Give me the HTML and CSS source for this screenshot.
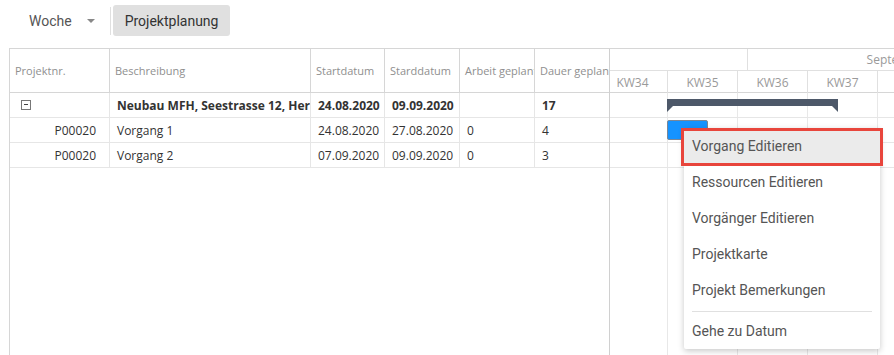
FILE: index.html
```html
<!DOCTYPE html>
<html lang="de">
<head>
    <meta charset="UTF-8">
    <meta name="viewport" content="width=device-width, initial-scale=1.0">
    <title>Projektplanung</title>
    <link rel="stylesheet" href="styles.css">
</head>
<body>

    <div class="toolbar">
        <div class="dropdown">
            <span>Woche</span>
            <span class="caret"></span>
        </div>
        <span class="tb-sep"></span>
        <button class="tb-btn">Projektplanung</button>
    </div>

    <div class="gantt">
        <div class="grid">
            <div class="grid-row grid-head">
                <div class="cell">Projektnr.</div>
                <div class="cell">Beschreibung</div>
                <div class="cell">Startdatum</div>
                <div class="cell">Starddatum</div>
                <div class="cell">Arbeit geplant</div>
                <div class="cell">Dauer geplant</div>
            </div>
            <div class="grid-row group">
                <div class="cell"><span class="collapse-icon"></span></div>
                <div class="cell">Neubau MFH, Seestrasse 12, Herrliberg</div>
                <div class="cell">24.08.2020</div>
                <div class="cell">09.09.2020</div>
                <div class="cell"></div>
                <div class="cell">17</div>
            </div>
            <div class="grid-row">
                <div class="cell nr">P00020</div>
                <div class="cell">Vorgang 1</div>
                <div class="cell">24.08.2020</div>
                <div class="cell">27.08.2020</div>
                <div class="cell">0</div>
                <div class="cell">4</div>
            </div>
            <div class="grid-row">
                <div class="cell nr">P00020</div>
                <div class="cell">Vorgang 2</div>
                <div class="cell">07.09.2020</div>
                <div class="cell">09.09.2020</div>
                <div class="cell">0</div>
                <div class="cell">3</div>
            </div>
        </div>

        <div class="chart">
            <div class="chart-inner">
                <div class="timeline">
                    <div class="months">
                        <div class="month aug"></div>
                        <div class="month sep">September</div>
                    </div>
                    <div class="weeks">
                        <div class="week">KW34</div>
                        <div class="week">KW35</div>
                        <div class="week">KW36</div>
                        <div class="week">KW37</div>
                        <div class="week">KW38</div>
                        <div class="week">KW39</div>
                    </div>
                </div>
                <div class="chart-body">
                    <div class="chart-row"><div class="summary-bar"></div></div>
                    <div class="chart-row"><div class="task-bar"></div></div>
                    <div class="chart-row"><div class="task-bar t2"></div></div>
                </div>
            </div>
        </div>
    </div>

    <!-- context menu opened on the task bar -->
    <ul class="context-menu">
        <li class="active">Vorgang Editieren</li>
        <li>Ressourcen Editieren</li>
        <li>Vorgänger Editieren</li>
        <li>Projektkarte</li>
        <li>Projekt Bemerkungen</li>
        <li class="separator"></li>
        <li>Gehe zu Datum</li>
    </ul>
    <div class="highlight-box"></div>

</body>
</html>
```

FILE: styles.css
```css
* {
    margin: 0;
    padding: 0;
    box-sizing: border-box;
}
body {
    font-family: Roboto, Arial, sans-serif;
    background-color: #fff;
    width: 894px;
    height: 355px;
    overflow: hidden;
    position: relative;
}

/* toolbar */
.toolbar {
    height: 48px;
    display: flex;
    align-items: flex-start;
    padding-top: 5px;
    padding-left: 29px;
}
.dropdown {
    height: 31px;
    display: flex;
    align-items: center;
    font-size: 14px;
    color: #555;
}
.caret {
    width: 0;
    height: 0;
    border-left: 4px solid transparent;
    border-right: 4px solid transparent;
    border-top: 4px solid #888;
    margin-left: 15px;
    margin-top: 1px;
}
.tb-sep {
    width: 1px;
    height: 28px;
    background-color: #e0e0e0;
    margin: 2px 2px 0 15px;
}
.tb-btn {
    height: 31px;
    padding: 0 12px;
    border: none;
    border-radius: 3px;
    background-color: #e0e0e0;
    font-family: Roboto, Arial, sans-serif;
    font-size: 14px;
    color: #333;
}

/* gantt */
.gantt {
    margin-left: 9px;
    height: 307px;
    border-top: 1px solid #d6d6d6;
    border-left: 1px solid #d6d6d6;
    display: flex;
    font-family: "Open Sans", Arial, sans-serif;
}
.grid {
    width: 600px;
    flex: none;
    border-right: 1px solid #d0d0d0;
}
.grid-row {
    display: grid;
    grid-template-columns: 100px 201px 74px 75px 75px 74px;
    height: 25px;
    border-bottom: 1px solid #e6e6e6;
    font-size: 12px;
    color: #333;
}
.grid-row .cell {
    border-right: 1px solid #e6e6e6;
    padding: 0 7px;
    display: flex;
    align-items: center;
    white-space: nowrap;
    overflow: hidden;
}
.grid-row .cell:last-child {
    border-right: none;
}
.grid-head {
    height: 44px;
    border-bottom: 1px solid #d6d6d6;
    font-size: 11px;
    color: #8f8f8f;
}
.grid-head .cell {
    padding: 0 5px;
    border-right-color: #d6d6d6;
}
.grid-row.group {
    font-weight: bold;
}
.grid-row .cell.nr {
    justify-content: flex-end;
    padding-right: 13px;
}
.collapse-icon {
    width: 10px;
    height: 10px;
    border: 1px solid #777;
    margin-left: 4px;
    position: relative;
}
.collapse-icon::after {
    content: "";
    position: absolute;
    left: 2px;
    top: 3px;
    width: 4px;
    height: 1px;
    background-color: #444;
}

/* chart side */
.chart {
    flex: 1;
    overflow: hidden;
}
.chart-inner {
    margin-left: -13px;
    width: 500px;
    height: 100%;
    display: flex;
    flex-direction: column;
}
.timeline {
    height: 44px;
    border-bottom: 1px solid #d6d6d6;
    font-size: 12px;
    color: #9a9a9a;
}
.months, .weeks {
    display: flex;
    height: 22px;
}
.months {
    border-bottom: 1px solid #e0e0e0;
}
.month {
    flex: none;
    display: flex;
    align-items: center;
    justify-content: center;
    white-space: nowrap;
}
.month.aug {
    width: 150px;
}
.month.sep {
    width: 300px;
    border-left: 1px solid #e0e0e0;
}
.week {
    width: 70px;
    flex: none;
    border-left: 1px solid #e0e0e0;
    display: flex;
    align-items: center;
    justify-content: center;
}
.chart-body {
    flex: 1;
    background-image: repeating-linear-gradient(to right, #e8e8e8 0 1px, transparent 1px 70px);
}
.chart-row {
    height: 25px;
    border-bottom: 1px solid #e6e6e6;
    position: relative;
}
.summary-bar {
    position: absolute;
    left: 70px;
    top: 6px;
    width: 171px;
    height: 7px;
    background-color: #4d5869;
}
.summary-bar::before,
.summary-bar::after {
    content: "";
    position: absolute;
    top: 7px;
    width: 0;
    height: 0;
    border-top: 6px solid #4d5869;
}
.summary-bar::before {
    left: 0;
    border-right: 6px solid transparent;
}
.summary-bar::after {
    right: 0;
    border-left: 6px solid transparent;
}
.task-bar {
    position: absolute;
    left: 70px;
    top: 2px;
    width: 41px;
    height: 20px;
    background-color: #1593ff;
    border: 1px solid #7a8797;
    border-radius: 2px;
}
.task-bar.t2 {
    left: 210px;
    width: 31px;
}

/* context menu */
.context-menu {
    position: absolute;
    left: 684px;
    top: 128px;
    width: 196px;
    list-style-type: none;
    background-color: #fff;
    box-shadow: 0 2px 6px rgba(0, 0, 0, 0.22);
    border-radius: 2px;
    font-size: 14px;
    color: #555;
}
.context-menu li {
    height: 36px;
    line-height: 36px;
    padding-left: 8px;
}
.context-menu li.active {
    background-color: #ebebeb;
}
.context-menu li.separator {
    height: 1px;
    margin: 3px 8px 1px;
    padding: 0;
    background-color: #e0e0e0;
}
.highlight-box {
    position: absolute;
    left: 681px;
    top: 128px;
    width: 202px;
    height: 38px;
    border: 3px solid #e8453c;
}
```
